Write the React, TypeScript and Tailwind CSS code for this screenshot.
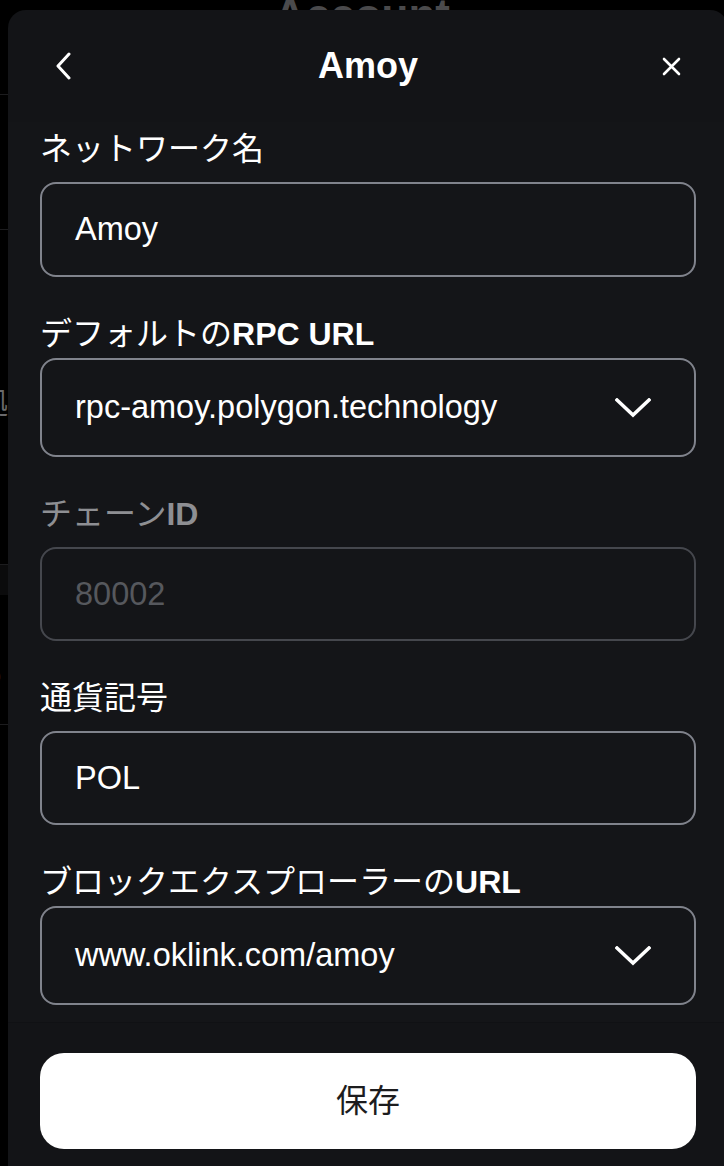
import React from 'react';

const FONT = "font-['Liberation_Sans','Noto_Sans_CJK_JP',sans-serif]";

interface FieldProps {
  label: React.ReactNode;
  value: string;
  disabled?: boolean;
  dropdown?: boolean;
  height: string;
  first?: boolean;
}

const ChevronDown = () => (
  <svg width="36" height="20" viewBox="0 0 36 20" fill="none" className="shrink-0">
    <polyline points="2,2 18,17 34,2" stroke="white" strokeWidth="3.5" strokeLinecap="square" />
  </svg>
);

const Field: React.FC<FieldProps> = ({ label, value, disabled, dropdown, height, first }) => (
  <div className={first ? '' : 'mt-[38px]'}>
    <div className={`text-[32px] leading-[38px] ${disabled ? 'text-[#8e8f93]' : 'text-white'}`}>{label}</div>
    <div
      className={`${dropdown ? 'mt-[5px]' : 'mt-[14px]'} ${height} flex items-center justify-between rounded-[16px] border-2 pl-[33px] pr-[43px] ${
        disabled ? 'border-[#45474d]' : 'border-[#80838c]'
      }`}
    >
      <span className={`text-[32.5px] ${disabled ? 'text-[#56585d]' : 'text-white'}`}>{value}</span>
      {dropdown && <ChevronDown />}
    </div>
  </div>
);

const App: React.FC = () => {
  return (
    <div className={`relative h-[1166px] w-[724px] overflow-hidden bg-black ${FONT}`}>
      {/* Page behind the sheet */}
      <div className="flex flex-col">
        <div className="flex h-[95px] justify-center border-b border-[#1c1c1e]">
          <span className="mt-[-18px] text-[44px] font-bold text-[#4a4a4c]">Account</span>
        </div>
        <div className="h-[135px] border-b border-[#1c1c1e]" />
        <div className="flex h-[335px] items-center border-b border-[#1c1c1e] pt-[10px]">
          <span className="ml-[-22px] text-[30px] text-[#6a6a6c]">拠</span>
        </div>
        <div className="h-[30px] bg-[#0b0b0c]" />
        <div className="flex h-[130px] items-end border-b border-[#1c1c1e] pb-[25px]">
          <span className="ml-[-22px] text-[30px] text-[#6a6a6c]">O</span>
        </div>
      </div>

      {/* Sheet */}
      <div className="absolute left-2 top-[10px] w-[720px] overflow-hidden rounded-t-[18px] bg-[#131417]">
        <div className="grid h-[112px] grid-cols-[1fr_auto_1fr] items-center px-[47px]">
          <button className="justify-self-start">
            <svg width="16" height="28" viewBox="0 0 16 28" fill="none">
              <polyline points="14,2 3,14 14,26" stroke="white" strokeWidth="3" strokeLinecap="round" strokeLinejoin="round" />
            </svg>
          </button>
          <h1 className="text-[36px] font-bold text-white">Amoy</h1>
          <button className="justify-self-end">
            <svg width="19" height="19" viewBox="0 0 19 19" fill="none">
              <path d="M2 2L17 17M17 2L2 17" stroke="white" strokeWidth="2.6" strokeLinecap="round" />
            </svg>
          </button>
        </div>

        <div className="bg-[#141518] px-8 pb-[17px] pt-2">
          <Field first label="ネットワーク名" value="Amoy" height="h-[95px]" />
          <Field
            label={
              <>
                デフォルトの<span className="font-semibold">RPC URL</span>
              </>
            }
            value="rpc-amoy.polygon.technology"
            dropdown
            height="h-[99px]"
          />
          <Field
            label={
              <>
                チェーン<span className="font-semibold">ID</span>
              </>
            }
            value="80002"
            disabled
            height="h-[94px]"
          />
          <Field label="通貨記号" value="POL" height="h-[94px]" />
          <Field
            label={
              <>
                ブロックエクスプローラーの<span className="font-semibold">URL</span>
              </>
            }
            value="www.oklink.com/amoy"
            dropdown
            height="h-[99px]"
          />
        </div>

        <div className="border-t border-[#101114] bg-[#131417] px-8 pb-[40px] pt-[30px]">
          <button className="flex h-[96px] w-full items-center justify-center rounded-[24px] bg-white text-[32px] text-[#1c1c1e]">
            保存
          </button>
        </div>
      </div>
    </div>
  );
};

export default App;
